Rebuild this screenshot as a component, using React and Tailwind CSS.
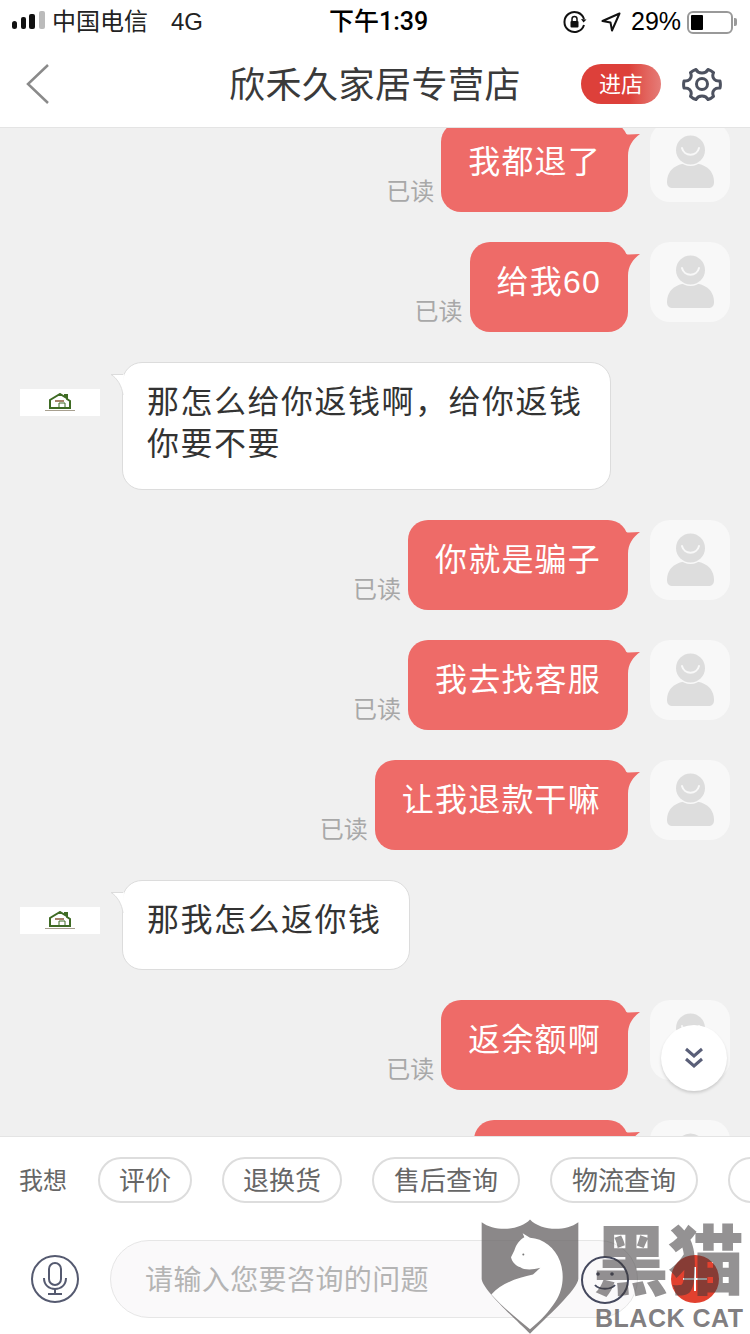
const CJK = "font-['Liberation_Sans','Noto_Sans_CJK_SC',sans-serif]";

/* =========================================
   SMALL ICONS
========================================= */
const UserAvatar = () => (
  <div className="w-20 h-20 shrink-0 rounded-[20px] bg-[#f8f8f8]">
    <svg width="80" height="80" viewBox="0 0 80 80">
      <path d="M17 60c0-10 7-19 23.500-19S64 50 64 60c0 4-2 6-6 6H23c-4 0-6-2-6-6z" fill="#dddddd" />
      <circle cx="40.500" cy="28" r="16" fill="#f8f8f8" />
      <circle cx="40.500" cy="28" r="14.500" fill="#dddddd" />
      <path d="M32 26c2 9 15 9 17 0" fill="none" stroke="#f8f8f8" strokeWidth="2" strokeLinecap="round" />
    </svg>
  </div>
);

const ShopAvatar = () => (
  <div className="w-20 h-20 shrink-0 flex items-center">
    <div className="w-20 h-[27px] bg-white flex flex-col items-center justify-center">
      <svg width="24" height="16" viewBox="0 0 24 16">
        <path d="M2 15V7l10-6 5 3V2h2v4l3 2v7z" fill="none" stroke="#3f6b24" strokeWidth="2" />
        <path d="M7 8h9" stroke="#8a5a3a" strokeWidth="1.500" />
        <path d="M11 10h6v5h-6z" fill="none" stroke="#3f6b24" strokeWidth="1" />
      </svg>
      <div className="h-px w-[30px] mt-px bg-[#a8a090]" />
    </div>
  </div>
);

const GearIcon = () => (
  <svg width="40" height="40" viewBox="0 0 40 40" fill="none" stroke="#4d5260" strokeWidth="3">
    <path d="M14 5.500c1.500 3 3.500 3.500 6 3.500s4.500-.5 6-3.500c2 .6 4 1.800 5.500 3.200-1.300 3-.8 5 .7 6.600 1.300 1.400 3 2 5.800 1.700.5 2.200.5 4.700 0 7-2.800-.3-4.500.3-5.800 1.700-1.500 1.600-2 3.600-.7 6.600-1.500 1.400-3.500 2.600-5.500 3.200-1.500-3-3.500-3.500-6-3.500s-4.500.5-6 3.500c-2-.6-4-1.800-5.500-3.200 1.300-3 .8-5-.7-6.600-1.300-1.400-3-2-5.800-1.700-.5-2.300-.5-4.800 0-7 2.800.3 4.500-.3 5.800-1.700 1.500-1.600 2-3.600.7-6.600C10 7.300 12 6.100 14 5.500z" strokeLinejoin="round" />
    <circle cx="20" cy="20" r="5.500" />
  </svg>
);

/* =========================================
   CHAT ROWS
========================================= */
const MineRow = ({ text }) => (
  <div className="flex items-end justify-end pr-5 h-[90px] shrink-0">
    <span className="text-2xl leading-8 text-[#a8a8a8] mr-[7px] mb-1">已读</span>
    <div className="relative h-[90px] flex items-center px-[27px] pb-[11px] rounded-[20px] bg-[#ee6b68] text-white text-[32px] tracking-[1.2px]">
      {text}
      <svg className="absolute left-full top-0 overflow-visible" width="12" height="36" viewBox="0 0 12 36">
        <path d="M-8 6c3 4 5 6.500 9 6.500L12 12C5 17 0 24 0 34h-8z" fill="#ee6b68" />
      </svg>
    </div>
    <div className="self-start ml-[22px]">
      <UserAvatar />
    </div>
  </div>
);

const ShopRow = ({ lines }) => (
  <div className="flex items-start pl-5 shrink-0">
    <ShopAvatar />
    <div className="relative ml-[22px] min-h-[90px] pl-6 pr-[27px] pt-[18px] pb-6 rounded-[20px] bg-white border border-[#dcdcdc] text-[32px] leading-[42px] tracking-[1.5px] text-[#333333]">
      {lines.map((line) => (
        <div key={line}>{line}</div>
      ))}
      <svg className="absolute -left-[13px] top-[11px] overflow-visible" width="14" height="24" viewBox="0 0 14 24">
        <path d="M14 0.500H1C7 4 12 12 13 21" fill="#ffffff" />
        <path d="M13 0.500H1C7 4 12 12 13 21" fill="none" stroke="#dcdcdc" strokeWidth="1" />
      </svg>
    </div>
  </div>
);

const Chip = ({ label, className = "" }) => (
  <div className={`h-[46px] shrink-0 flex items-center justify-center pt-[2px] rounded-full border-2 border-[#dddddd] text-[26px] text-[#666666] ${className}`}>
    {label}
  </div>
);

/* =========================================
   WATERMARK
========================================= */
const Watermark = () => (
  <div className="absolute left-0 top-0 w-full h-full pointer-events-none overflow-hidden">
    <svg className="absolute left-[480px] top-[1217px]" width="100" height="117" viewBox="90 650 300 350">
      <path d="M95 665c40 30 115 25 145-8 30 33 105 38 145 8v170c0 30-100 120-145 165-45-45-145-135-145-165z" fill="#6a6668" fillOpacity="0.78" />
      <path d="M218 698l22 14c40 2 75 30 90 70 14 40 10 85-14 122-18 28-45 58-76 82-35-28-82-66-116-104 30-35 80-50 125-60l22-20c-30 8-50 5-60-2-12-4-24-14-28-30l10-20c6-20 16-32 30-40z" fill="#ffffff" />
      <circle cx="220" cy="762" r="3" fill="#777777" />
    </svg>
    <div className="absolute left-[593px] top-[1221px] w-[160px] h-[84px] text-[76px] leading-[84px] font-black tracking-[-1px] whitespace-nowrap text-[#3c383a]/55">
      黑猫
    </div>
    <div className="absolute left-[595px] top-[1303px] w-[153px] text-[25px] leading-[30px] font-bold tracking-[0.5px] whitespace-nowrap text-[#4a4648]/70">
      BLACK CAT
    </div>
  </div>
);

/* =========================================
   MAIN PAGE
========================================= */
export default function App() {
  return (
    <div className={`relative w-[750px] h-[1334px] flex flex-col overflow-hidden bg-[#f0f0f0] ${CJK}`}>

      {/* STATUS BAR */}
      <div className="h-11 shrink-0 bg-white flex items-center pl-3 pr-3 text-black">
        <svg width="34" height="20" viewBox="0 0 34 20" className="-mt-[4px]">
          <rect x="0" y="11" width="5" height="8" rx="2.500" fill="#111" />
          <rect x="9" y="7" width="5" height="12" rx="2" fill="#111" />
          <rect x="17" y="4" width="6" height="15" rx="2" fill="#111" />
          <rect x="27" y="1" width="6" height="18" rx="2" fill="#bbb" />
        </svg>
        <span className="ml-[6px] text-2xl text-[#222222] w-[119px]">中国电信</span>
        <span className="text-2xl text-[#222222] w-[158px]">4G</span>
        <span className="text-[25px] font-medium font-['Roboto','Noto_Sans_CJK_SC',sans-serif] w-[234px]">下午1:39</span>
        <svg width="24" height="24" viewBox="0 0 24 24" fill="none" stroke="#111" strokeWidth="2">
          <path d="M21 15a10 10 0 1 1 0-6" />
          <path d="M23.500 9.500l-3 3-2.500-3.500z" fill="#111" stroke="none" />
          <rect x="7.500" y="11" width="8" height="6.500" rx="1" fill="#111" stroke="none" />
          <path d="M9 11V9a2.500 2.500 0 0 1 5 0v2" strokeWidth="1.500" />
        </svg>
        <svg className="ml-[14px]" width="20" height="20" viewBox="0 0 20 20" fill="none" stroke="#111" strokeWidth="2" strokeLinejoin="round">
          <path d="M18.500 1.500L1.500 9l8 1.500 1.500 8z" />
        </svg>
        <span className="ml-[10px] text-[25px] w-[56px] whitespace-nowrap">29%</span>
        <div className="w-[46px] h-[23px] rounded-[6px] border-2 border-[#999999] p-[2px]">
          <div className="w-3 h-full bg-black rounded-[1px]" />
        </div>
        <div className="w-[3px] h-[8px] ml-px bg-[#999999] rounded-r-[2px]" />
      </div>

      {/* NAV BAR */}
      <div className="h-[84px] shrink-0 bg-white border-b border-[#e4e4e4] flex items-center pb-[3px]">
        <div className="w-[169px] pl-[25px]">
          <svg width="24" height="42" viewBox="0 0 24 42" fill="none" stroke="#8a8a8a" strokeWidth="2.500">
            <path d="M23 2L3 21l20 19" />
          </svg>
        </div>
        <div className="flex-1 text-center pt-[3px] text-4xl tracking-[0.5px] text-[#3a3a3a]">欣禾久家居专营店</div>
        <div className="w-[169px] flex items-center">
          <div className="w-20 h-10 rounded-full bg-gradient-to-r from-[#dd403a] from-[60%] to-[#e57c78] text-white text-[22px] flex items-center justify-center">
            进店
          </div>
          <div className="ml-[21px]">
            <GearIcon />
          </div>
        </div>
      </div>

      {/* CHAT LIST */}
      <div className="flex-1 min-h-0 overflow-hidden">
        <div className="-mt-[6px] flex flex-col gap-[30px]">
          <MineRow text="我都退了" />
          <MineRow text="给我60" />
          <ShopRow lines={["那怎么给你返钱啊，给你返钱", "你要不要"]} />
          <MineRow text="你就是骗子" />
          <MineRow text="我去找客服" />
          <MineRow text="让我退款干嘛" />
          <ShopRow lines={["那我怎么返你钱"]} />
          <MineRow text="返余额啊" />
          <MineRow text="我不要" />
        </div>
      </div>

      {/* SCROLL DOWN BUTTON */}
      <div className="absolute left-[661px] top-[1025px] w-[66px] h-[66px] rounded-full bg-white shadow-[0_2px_3px_rgba(0,0,0,0.15)] flex items-center justify-center">
        <svg width="20" height="22" viewBox="0 0 20 22" fill="none" stroke="#5a5f78" strokeWidth="3">
          <path d="M2 2l8 7 8-7" />
          <path d="M2 12l8 7 8-7" />
        </svg>
      </div>

      {/* BOTTOM PANEL */}
      <div className="h-[198px] shrink-0 bg-white border-t border-[#e4e4e4] flex flex-col">
        <div className="flex items-center gap-[30px] pl-[19px] pt-5 overflow-hidden">
          <span className="shrink-0 pt-[2px] text-2xl text-[#666666] w-[49px]">我想</span>
          <Chip label="评价" className="w-[94px]" />
          <Chip label="退换货" className="w-[120px]" />
          <Chip label="售后查询" className="w-[148px]" />
          <Chip label="物流查询" className="w-[148px]" />
          <Chip label="联系客服" className="w-[148px]" />
        </div>
        <div className="flex items-center pl-[31px] mt-[37px]">
          <div className="w-12 h-12 shrink-0 rounded-full border-2 border-[#555a70] flex items-center justify-center">
            <svg width="26" height="36" viewBox="0 0 26 36" fill="none" stroke="#555a70" strokeWidth="2">
              <rect x="7" y="2" width="12" height="22" rx="6" />
              <path d="M2 17c0 7 5 11 11 11s11-4 11-11" />
              <path d="M13 28v5M6 33h14" />
            </svg>
          </div>
          <div className="relative ml-[31px] w-[528px] h-[78px] rounded-full bg-[#faf9fa] border border-[#e6e6e6] flex items-center pl-[34px] pt-[3px] text-[28px] tracking-[0.4px] text-[#b4b4b4]">
            请输入您要咨询的问题
            <div className="absolute left-[470px] top-[15px] w-12 h-12 rounded-full border-2 border-[#45495e]">
              <svg width="44" height="44" viewBox="0 0 44 44" fill="none" stroke="#45495e" strokeWidth="2">
                <circle cx="15" cy="16" r="1.800" fill="#45495e" stroke="none" />
                <circle cx="29" cy="16" r="1.800" fill="#45495e" stroke="none" />
                <path d="M12 27c4 5 16 5 20 0" />
              </svg>
            </div>
          </div>
          <div className="relative ml-[33px] w-12 h-12 shrink-0 rounded-full bg-[#e2412f]">
            <div className="absolute left-[12px] top-[23px] w-6 h-[2px] bg-white" />
            <div className="absolute left-[23px] top-[12px] w-[2px] h-6 bg-white" />
          </div>
        </div>
      </div>

      <Watermark />
    </div>
  );
}
